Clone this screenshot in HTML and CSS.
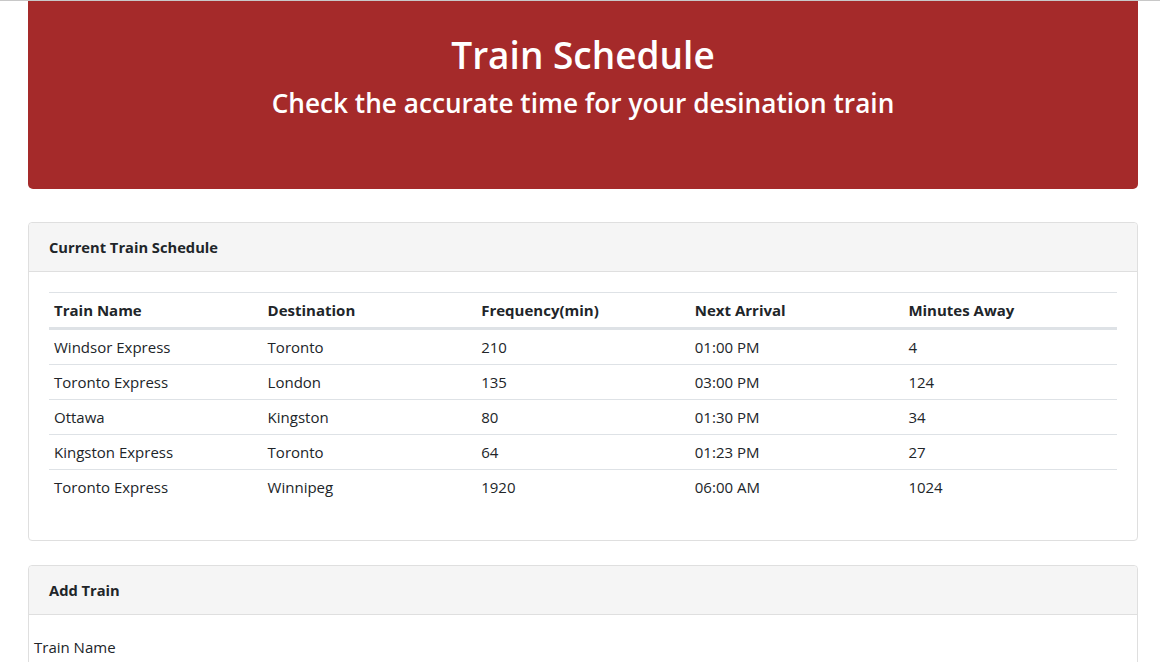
FILE: index.html
```html
<!DOCTYPE html>
<html lang="en">
<head>
<meta charset="utf-8">
<title>Train Schedule</title>
<link rel="stylesheet" href="styles.css">
</head>
<body>
<div class="topline"></div>
<div class="container">
  <header class="jumbotron">
    <h1 class="title">Train Schedule</h1>
    <h3 class="subtitle">Check the accurate time for your desination train</h3>
  </header>

  <section class="card schedule-card">
    <div class="card-header">Current Train Schedule</div>
    <div class="card-body">
      <table class="table">
        <thead>
          <tr>
            <th>Train Name</th>
            <th>Destination</th>
            <th>Frequency(min)</th>
            <th>Next Arrival</th>
            <th>Minutes Away</th>
          </tr>
        </thead>
        <tbody>
          <tr><td>Windsor Express</td><td>Toronto</td><td>210</td><td>01:00 PM</td><td>4</td></tr>
          <tr><td>Toronto Express</td><td>London</td><td>135</td><td>03:00 PM</td><td>124</td></tr>
          <tr><td>Ottawa</td><td>Kingston</td><td>80</td><td>01:30 PM</td><td>34</td></tr>
          <tr><td>Kingston Express</td><td>Toronto</td><td>64</td><td>01:23 PM</td><td>27</td></tr>
          <tr><td>Toronto Express</td><td>Winnipeg</td><td>1920</td><td>06:00 AM</td><td>1024</td></tr>
        </tbody>
      </table>
    </div>
  </section>

  <section class="card add-card">
    <div class="card-header">Add Train</div>
    <form class="form-body">
      <label class="form-label" for="train-name">Train Name</label>
      <input class="form-input" id="train-name" type="text">
    </form>
  </section>
</div>
</body>
</html>
```

FILE: styles.css
```css
* {
  box-sizing: border-box;
}

html, body {
  margin: 0;
  padding: 0;
  background: #ffffff;
}

body {
  font-family: "Open Sans", "Noto Sans", "Liberation Sans", sans-serif;
  font-size: 15px;
  line-height: 24px;
  color: #212529;
  overflow: hidden;
}

.topline {
  height: 1px;
  background: #c8c8c8;
}

.container {
  width: 1110px;
  margin-left: 28px;
}

.jumbotron {
  background: #a52a2a;
  color: #ffffff;
  border-radius: 0 0 5px 5px;
  height: 188px;
  padding-top: 29px;
  text-align: center;
  margin-bottom: 33px;
}

.title {
  margin: 0 0 5px;
  font-size: 37px;
  line-height: 50px;
  font-weight: 600;
}

.subtitle {
  margin: 0;
  font-size: 26.2px;
  line-height: 36px;
  font-weight: 600;
}

.card {
  border: 1px solid #dfdfdf;
  border-radius: 4px;
  background: #ffffff;
}

.schedule-card {
  margin-bottom: 24px;
}

.card-header {
  background: #f5f5f5;
  border-bottom: 1px solid #dfdfdf;
  padding: 12px 20px;
  font-weight: 700;
  font-size: 14.7px;
  border-radius: 4px 4px 0 0;
}

.card-body {
  padding: 20px;
}

.table {
  width: 100%;
  border-collapse: collapse;
  table-layout: fixed;
  margin-bottom: 16px;
}

.table th,
.table td {
  text-align: left;
  padding: 5px 5px;
  border-top: 1px solid #dee2e6;
  vertical-align: top;
}

.table th {
  font-weight: 700;
  border-bottom: 3px solid #dee2e6;
  padding-bottom: 5px;
}

.table thead + tbody tr:first-child td {
  border-top: none;
}

.form-body {
  padding: 20px 5px 0;
}

.form-label {
  display: block;
}

.form-input {
  display: block;
  width: 100%;
  height: 38px;
  margin-top: 8px;
  border: 1px solid #ced4da;
  border-radius: 4px;
}
```
